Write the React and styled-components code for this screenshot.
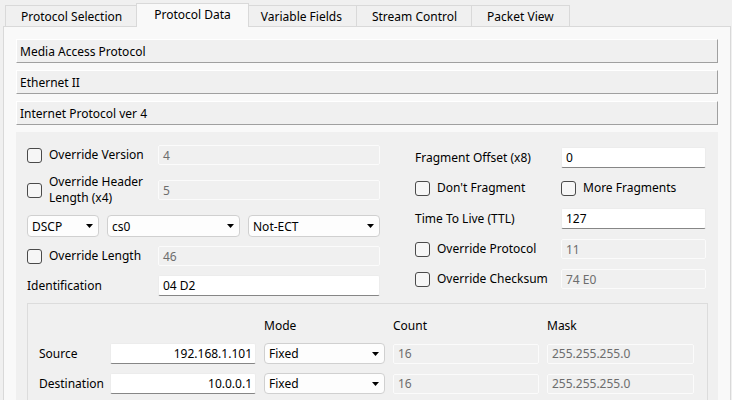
import React from 'react';
import styled, { createGlobalStyle } from 'styled-components';

const GlobalStyle = createGlobalStyle`
  html, body {
    margin: 0;
    padding: 0;
    background: #f0f0f0;
  }
  body {
    font-family: "Segoe UI", "Noto Sans", sans-serif;
    font-size: 12px;
    color: #000;
  }
  * {
    box-sizing: border-box;
  }
`;

const Window = styled.div`
  width: 732px;
  height: 400px;
  overflow: hidden;
  background: #f0f0f0;
  padding-top: 5px;
`;

const TabBar = styled.div`
  display: flex;
  height: 21px;
  padding-left: 5px;
  position: relative;
  z-index: 1;
`;

const Tab = styled.div`
  position: relative;
  display: flex;
  align-items: center;
  height: ${p => (p.$active ? '24px' : '21px')};
  margin: ${p => (p.$active ? '-2px -2px 0 -2px' : '0')};
  padding: 0 ${p => (p.$active ? '17px' : '15px')};
  padding-bottom: ${p => (p.$active ? '2px' : '0')};
  background: ${p => (p.$active ? '#f9f9f9' : '#f0f0f0')};
  border: 1px solid #d9d9d9;
  border-bottom: none;
  z-index: ${p => (p.$active ? 2 : 1)};

  & + & {
    margin-left: ${p => (p.$active ? '-2px' : '-1px')};
  }
`;

const Panel = styled.div`
  display: flex;
  flex-direction: column;
  gap: 7px;
  width: 728px;
  height: 374px;
  margin-left: 3px;
  padding: 12px 12px 0 12px;
  background: #f9f9f9;
  border: 1px solid #d9d9d9;
  border-bottom: none;
`;

const SectionHeader = styled.div`
  display: flex;
  align-items: center;
  flex-shrink: 0;
  height: 24px;
  padding-left: 3px;
  background: #f0f0f0;
  border: 1px solid;
  border-color: #fff #a0a0a0 #a0a0a0 #fff;
`;

const Body = styled.div`
  flex: 1;
  display: grid;
  grid-template-columns: 353px 291px;
  column-gap: 35px;
  row-gap: 7px;
  align-content: start;
  padding: 13px 11px 0 11px;
  background: #f0f0f0;
`;

const Column = styled.div`
  display: flex;
  flex-direction: column;
  gap: ${p => p.$gap}px;
  padding-top: ${p => p.$top || 0}px;
`;

const FieldRow = styled.div`
  display: grid;
  grid-template-columns: ${p => p.$label}px 1fr;
  align-items: center;
`;

const PairRow = styled.div`
  display: grid;
  grid-template-columns: 146px 1fr;
  align-items: center;
  height: 20px;
`;

const CheckLabel = styled.label`
  display: flex;
  align-items: center;
  gap: 7px;
  line-height: 16px;
  white-space: nowrap;
`;

const CheckBox = styled.input.attrs({ type: 'checkbox' })`
  appearance: none;
  flex-shrink: 0;
  width: 15px;
  height: 15px;
  margin: 0;
  border: 1px solid #4a4a4a;
  border-radius: 3px;
  background: #f6f6f6;
`;

const Label = styled.span`
  line-height: 16px;
`;

const TextBox = styled.div`
  display: flex;
  align-items: center;
  justify-content: ${p => (p.$right ? 'flex-end' : 'flex-start')};
  height: ${p => (p.$disabled ? '20px' : '21px')};
  padding: 0 ${p => (p.$right ? '3px' : '0')} 0 4px;
  background: ${p => (p.$disabled ? '#f0f0f0' : '#fff')};
  color: ${p => (p.$disabled ? '#6d6d6d' : '#000')};
  border: 1px solid ${p => (p.$disabled ? '#fbfbfb' : '#ececec')};
  border-bottom-color: ${p => (p.$disabled ? '#fbfbfb' : '#868686')};
  border-radius: 2px;
`;

const ComboRow = styled.div`
  display: grid;
  grid-template-columns: 72px 133px 132px;
  column-gap: 8px;
`;

const Combo = styled.div`
  display: flex;
  align-items: center;
  justify-content: space-between;
  height: ${p => p.$h || 22}px;
  padding: 0 5px 0 4px;
  background: #fdfdfd;
  border: 1px solid #d0d0d0;
  border-radius: 4px;
`;

const Caret = () => (
  <svg width="7" height="4" viewBox="0 0 7 4">
    <path d="M0 0h7L3.5 4z" fill="#000" />
  </svg>
);

const GroupBox = styled.div`
  grid-column: 1 / -1;
  display: grid;
  grid-template-columns: 63px 146px 121px 146px 147px;
  column-gap: 8px;
  row-gap: 9px;
  align-items: center;
  align-content: start;
  width: 681px;
  height: 130px;
  padding: 14px 11px 0 11px;
  border: 1px solid #dcdcdc;
`;

const ColHead = styled.div`
  height: 16px;
  line-height: 16px;
`;

const CheckField = ({ label, value, labelWidth }) => (
  <FieldRow $label={labelWidth}>
    <CheckLabel>
      <CheckBox />
      <Label>{label}</Label>
    </CheckLabel>
    <TextBox $disabled>{value}</TextBox>
  </FieldRow>
);

const tabs = ['Protocol Selection', 'Protocol Data', 'Variable Fields', 'Stream Control', 'Packet View'];

const addresses = [
  { name: 'Source', value: '192.168.1.101' },
  { name: 'Destination', value: '10.0.0.1' },
];

export default function App() {
  return (
    <Window>
      <GlobalStyle />
      <TabBar>
        {tabs.map(t => (
          <Tab key={t} $active={t === 'Protocol Data'}>{t}</Tab>
        ))}
      </TabBar>
      <Panel>
        <SectionHeader>Media Access Protocol</SectionHeader>
        <SectionHeader>Ethernet II</SectionHeader>
        <SectionHeader>Internet Protocol ver 4</SectionHeader>
        <Body>
          <Column $gap={9}>
            <CheckField label="Override Version" value="4" labelWidth={131} />
            <CheckField
              label={<>Override Header<br />Length (x4)</>}
              value="5"
              labelWidth={131}
            />
            <ComboRow>
              <Combo>DSCP<Caret /></Combo>
              <Combo>cs0<Caret /></Combo>
              <Combo>Not-ECT<Caret /></Combo>
            </ComboRow>
            <CheckField label="Override Length" value="46" labelWidth={131} />
            <FieldRow $label={131}>
              <Label>Identification</Label>
              <TextBox>04 D2</TextBox>
            </FieldRow>
          </Column>
          <Column $gap={10} $top={2}>
            <FieldRow $label={146}>
              <Label>Fragment Offset (x8)</Label>
              <TextBox>0</TextBox>
            </FieldRow>
            <PairRow>
              <CheckLabel><CheckBox /><Label>Don't Fragment</Label></CheckLabel>
              <CheckLabel><CheckBox /><Label>More Fragments</Label></CheckLabel>
            </PairRow>
            <FieldRow $label={146}>
              <Label>Time To Live (TTL)</Label>
              <TextBox>127</TextBox>
            </FieldRow>
            <CheckField label="Override Protocol" value="11" labelWidth={146} />
            <CheckField label="Override Checksum" value="74 E0" labelWidth={146} />
          </Column>
          <GroupBox>
            <span />
            <span />
            <ColHead>Mode</ColHead>
            <ColHead>Count</ColHead>
            <ColHead>Mask</ColHead>
            {addresses.map(a => (
              <React.Fragment key={a.name}>
                <Label>{a.name}</Label>
                <TextBox $right>{a.value}</TextBox>
                <Combo $h={21}>Fixed<Caret /></Combo>
                <TextBox $disabled>16</TextBox>
                <TextBox $disabled>255.255.255.0</TextBox>
              </React.Fragment>
            ))}
          </GroupBox>
        </Body>
      </Panel>
    </Window>
  );
}
